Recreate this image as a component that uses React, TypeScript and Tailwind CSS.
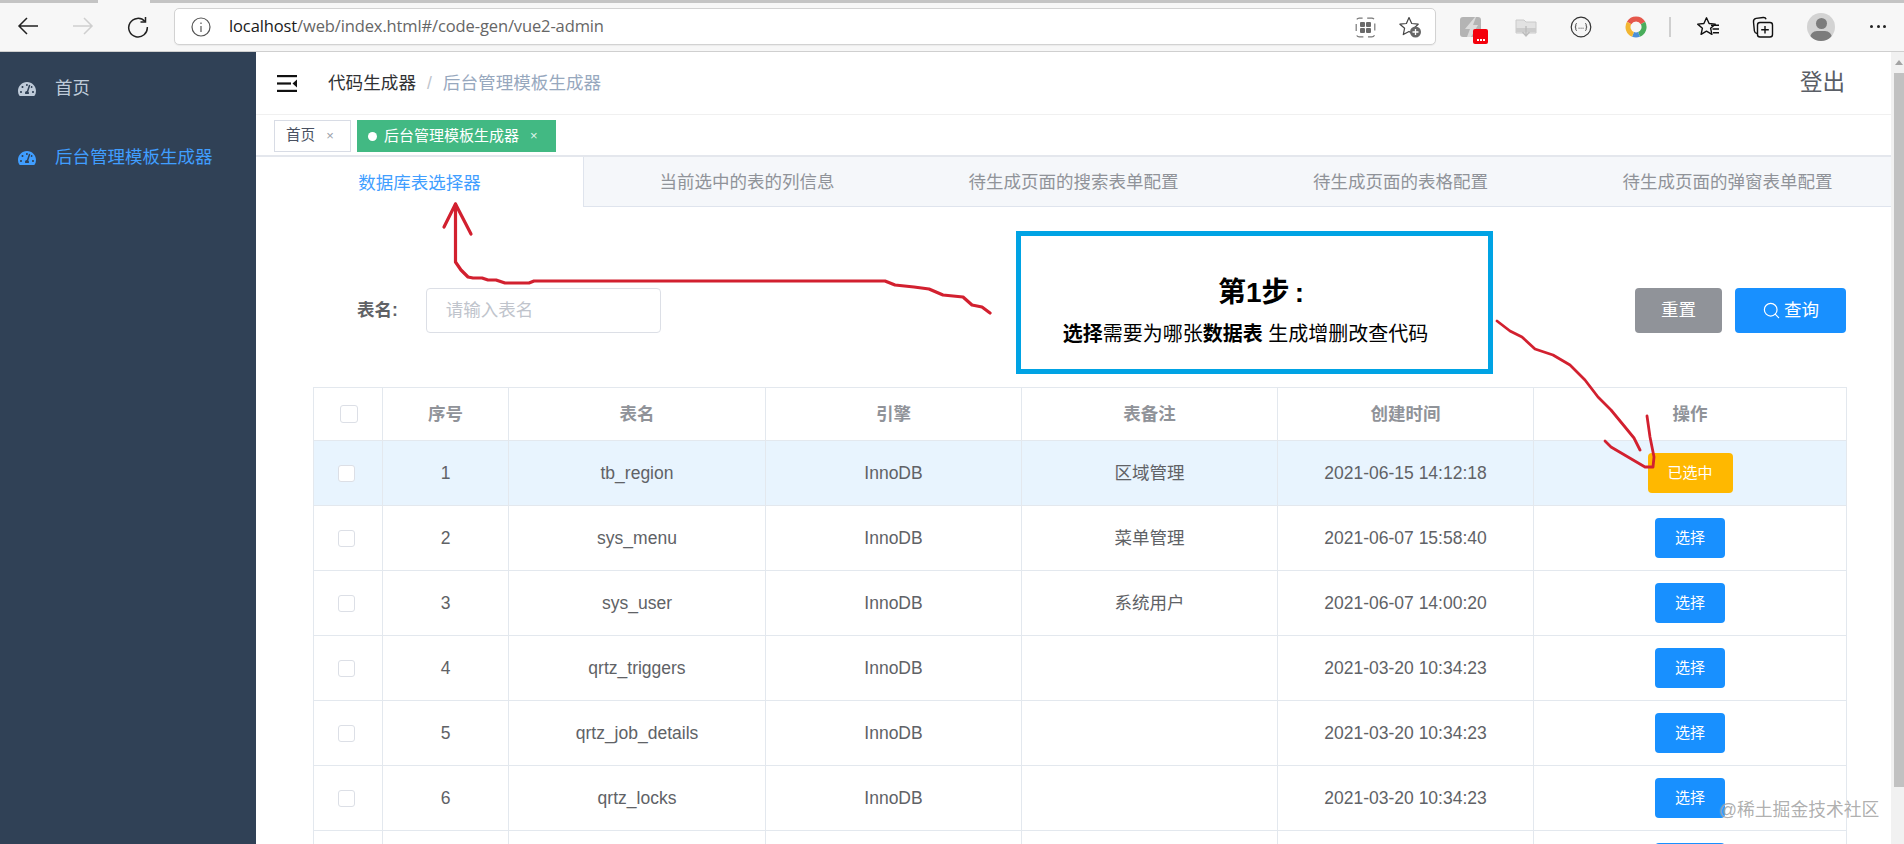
import React from "react";
import { FaTachometerAlt } from "react-icons/fa";
import { Search } from "lucide-react";

const rows = [
  { n: "1", name: "tb_region", engine: "InnoDB", note: "区域管理", time: "2021-06-15 14:12:18", on: true },
  { n: "2", name: "sys_menu", engine: "InnoDB", note: "菜单管理", time: "2021-06-07 15:58:40" },
  { n: "3", name: "sys_user", engine: "InnoDB", note: "系统用户", time: "2021-06-07 14:00:20" },
  { n: "4", name: "qrtz_triggers", engine: "InnoDB", note: "", time: "2021-03-20 10:34:23" },
  { n: "5", name: "qrtz_job_details", engine: "InnoDB", note: "", time: "2021-03-20 10:34:23" },
  { n: "6", name: "qrtz_locks", engine: "InnoDB", note: "", time: "2021-03-20 10:34:23" },
  { n: "", name: "", engine: "", note: "", time: "", partial: true },
];

const tabs = ["数据库表选择器", "当前选中的表的列信息", "待生成页面的搜索表单配置", "待生成页面的表格配置", "待生成页面的弹窗表单配置"];

function BrowserBar() {
  return (
    <div className="h-[52px] shrink-0 bg-[#f7f7f7] border-b border-[#cfcfcf] relative flex items-start">
      <div className="absolute top-0 left-0 right-0 h-[3px] bg-[#c4c4c4]">
        <div className="ml-[98px] w-[52px] h-[3px] bg-[#f7f7f7]" />
      </div>
      <svg className="absolute left-[17px] top-[16px]" width="22" height="20" viewBox="0 0 22 20" fill="none" stroke="#222" strokeWidth="1.5">
        <path d="M21 10H2M10 2l-8 8 8 8" />
      </svg>
      <svg className="absolute left-[72px] top-[16px]" width="22" height="20" viewBox="0 0 22 20" fill="none" stroke="#cfcfcf" strokeWidth="1.5">
        <path d="M1 10h19M12 2l8 8-8 8" />
      </svg>
      <svg className="absolute left-[127px] top-[16px]" width="22" height="22" viewBox="0 0 22 22" fill="none" stroke="#222" strokeWidth="1.5">
        <path d="M18 5.5A9.3 9.3 0 1 0 20.3 11" />
        <path d="M18.5 1v5h-5" />
      </svg>
      <div className="absolute left-[174px] top-[8px] w-[1262px] h-[37px] bg-white rounded-[5px] border border-[#d2d2d2] shadow-[0_1px_1px_rgba(0,0,0,0.05)] flex items-center">
        <svg className="ml-[16px] shrink-0" width="20" height="20" viewBox="0 0 20 20" fill="none" stroke="#555" strokeWidth="1.2">
          <circle cx="10" cy="10" r="9" />
          <path d="M10 9v6M10 5.5v1.4" />
        </svg>
        <div className="ml-[18px] text-[16.5px] font-['Open_Sans','Noto_Sans',sans-serif] text-[#666] tracking-[-0.12px] whitespace-nowrap">
          <span className="text-[#1a1a1a]">localhost</span>/web/index.html#/code-gen/vue2-admin
        </div>
      </div>
      <svg className="absolute left-[1355px] top-[17px]" width="21" height="21" viewBox="0 0 21 21" fill="none">
        <rect x="1.2" y="1.2" width="18.6" height="18.6" rx="3" stroke="#777" strokeWidth="1.2" strokeDasharray="7 4.6" strokeDashoffset="-8" />
        <rect x="5" y="5" width="5" height="5" rx="1" fill="#6a6a6a" />
        <rect x="11" y="5" width="5" height="5" rx="1" fill="#6a6a6a" />
        <rect x="5" y="11" width="5" height="5" rx="1" fill="#6a6a6a" />
        <rect x="11" y="11" width="5" height="5" rx="1" fill="#6a6a6a" />
      </svg>
      <svg className="absolute left-[1399px] top-[16px]" width="24" height="23" viewBox="0 0 24 23" fill="none">
        <path d="M10 1.5l2.7 6 6.5.7-4.8 4.4 1.3 6.4L10 15.4 4.3 18.6l1.3-6.4L.9 8.2l6.5-.7z" stroke="#444" strokeWidth="1.2" strokeLinejoin="round" />
        <circle cx="16.5" cy="16" r="5.5" fill="#666" />
        <path d="M16.5 13v6M13.5 16h6" stroke="#fff" strokeWidth="1.3" />
      </svg>
      <svg className="absolute left-[1460px] top-[17px]" width="22" height="21" viewBox="0 0 22 21">
        <rect width="21" height="20" rx="3" fill="#b4b4b4" />
        <path d="M15 0L5 12h5l-3 8h4l7-12h-5l3-8z" fill="#dcdcdc" />
      </svg>
      <div className="absolute left-[1473px] top-[29px] w-[15px] h-[15px] bg-[#f4000c] rounded-[2px] flex items-end justify-center pb-[3px] gap-[1px]">
        <span className="w-[2px] h-[2px] bg-white" />
        <span className="w-[2px] h-[2px] bg-white" />
        <span className="w-[2px] h-[2px] bg-white" />
      </div>
      <svg className="absolute left-[1515px] top-[18px]" width="22" height="20" viewBox="0 0 22 20">
        <path d="M1 2h8l2 2h10v11H1z" fill="#e2e2e2" stroke="#cacaca" />
        <path d="M1 10h20v4H1z" fill="#cccccc" />
        <path d="M11 8v9M7.5 14l3.5 4 3.5-4" fill="none" stroke="#bdbdbd" strokeWidth="1.4" />
      </svg>
      <svg className="absolute left-[1570px] top-[16px]" width="22" height="22" viewBox="0 0 22 22" fill="none">
        <circle cx="11" cy="11" r="9.8" stroke="#333" strokeWidth="1.2" />
        <path d="M6.8 7.5c-1 0-1 .6-1 1.5v1c0 .6-.3 1-.9 1 .6 0 .9.4.9 1v1c0 .9 0 1.5 1 1.5M15.2 7.5c1 0 1 .6 1 1.5v1c0 .6.3 1 .9 1-.6 0-.9.4-.9 1v1c0 .9 0 1.5-1 1.5" stroke="#333" strokeWidth="0.9" />
        <path d="M8.6 12.2h.9M10.6 12.2h.9M12.6 12.2h.9" stroke="#333" strokeWidth="1" />
      </svg>
      <svg className="absolute left-[1625px] top-[16px]" width="22" height="22" viewBox="0 0 22 22" fill="none" strokeWidth="5">
        <path d="M4.1 7A8 8 0 0 1 18 7" stroke="#e5574b" />
        <path d="M18 7A8 8 0 0 1 14 18.4" stroke="#49ad5b" />
        <path d="M14 18.4A8 8 0 0 1 8 18.4" stroke="#4a8fd8" />
        <path d="M8 18.4A8 8 0 0 1 4.1 7" stroke="#f2b632" />
      </svg>
      <div className="absolute left-[1669px] top-[17px] w-[2px] h-[20px] bg-[#cfcfcf]" />
      <svg className="absolute left-[1697px] top-[16px]" width="23" height="22" viewBox="0 0 23 22" fill="none" stroke="#111" strokeWidth="1.4" strokeLinejoin="round">
        <path d="M9.5 1.8l2.6 5.7 6.2.6-4.7 4.1 1.3 6.1-5.4-3.1-5.4 3.1 1.3-6.1L.7 8.1l6.2-.6z" />
        <path d="M14 9.2h8M15.5 13h6.5M16 16.8h6" />
      </svg>
      <svg className="absolute left-[1752px] top-[16px]" width="23" height="22" viewBox="0 0 23 22" fill="none" stroke="#111" strokeWidth="1.4">
        <rect x="5.5" y="6.5" width="15" height="14.5" rx="2.5" />
        <path d="M13 10v7.5M9.2 13.8h7.6" />
        <path d="M5 17.5c-1.5-.4-2.4-1.2-2.6-2.5L1.5 6c-.2-1.8.7-3.3 2.6-3.6l7-.9c1.6-.2 2.6.5 3 1.8" />
      </svg>
      <div className="absolute left-[1807px] top-[13px] w-[28px] h-[28px] rounded-full bg-[#d3d3d3] overflow-hidden">
        <div className="mx-auto mt-[5px] w-[11px] h-[11px] rounded-full bg-[#7c7c7c]" />
        <div className="mx-auto mt-[2px] w-[22px] h-[14px] rounded-full bg-[#7c7c7c]" />
      </div>
      <div className="absolute left-[1870px] top-[25px] flex gap-[3.5px]">
        <span className="w-[3px] h-[3px] rounded-full bg-[#222]" />
        <span className="w-[3px] h-[3px] rounded-full bg-[#222]" />
        <span className="w-[3px] h-[3px] rounded-full bg-[#222]" />
      </div>
    </div>
  );
}

function Sidebar() {
  return (
    <aside className="w-[256px] shrink-0 bg-[#304156] pt-[4px]">
      <div className="h-[65px] flex items-center pl-[18px] text-[#bfcbd9]">
        <FaTachometerAlt size={18} />
        <span className="ml-[19px] text-[17.5px]">首页</span>
      </div>
      <div className="mt-[4px] h-[65px] flex items-center pl-[18px] text-[#409eff]">
        <FaTachometerAlt size={18} />
        <span className="ml-[19px] text-[17.5px]">后台管理模板生成器</span>
      </div>
    </aside>
  );
}

function Header() {
  return (
    <div className="h-[63px] shrink-0 border-b border-[#f0f0f0] flex items-center pl-[21px] pr-[46px]">
      <svg width="20" height="17" viewBox="0 0 20 17" fill="#111">
        <rect x="0" y="0" width="20" height="2.2" />
        <rect x="0" y="7.4" width="14" height="2.2" />
        <rect x="0" y="14.8" width="20" height="2.2" />
        <path d="M15.5 8.5L20 4.5v8z" />
      </svg>
      <span className="ml-[31px] text-[17.6px] text-[#303133]">代码生成器</span>
      <span className="ml-[11px] text-[17.5px] text-[#c0c4cc]">/</span>
      <span className="ml-[11px] text-[17.6px] text-[#97a8be]">后台管理模板生成器</span>
      <span className="ml-auto text-[22.5px] text-[#5a5e66]">登出</span>
    </div>
  );
}

function TagBar() {
  return (
    <div className="h-[42px] shrink-0 border-b-2 border-[#e4e7ed] flex items-start pt-[5px] pl-[18px] gap-[6px]">
      <div className="w-[77px] h-[32px] border border-[#d8dce5] flex items-center pl-[11px] text-[14.6px] text-[#495060]">
        首页
        <span className="ml-[11px] text-[13px] text-[#9aa0a8]">×</span>
      </div>
      <div className="w-[199px] h-[32px] bg-[#42b983] flex items-center pl-[11px] text-[15px] text-white">
        <span className="w-[9px] h-[9px] rounded-full bg-white" />
        <span className="ml-[7px]">后台管理模板生成器</span>
        <span className="ml-[11px] text-[13px] text-[#dff3ea]">×</span>
      </div>
    </div>
  );
}

function Tabs() {
  return (
    <div className="h-[50px] shrink-0 grid grid-cols-5">
      {tabs.map((t, i) => (
        <div
          key={t}
          className={
            i === 0
              ? "flex items-center justify-center pt-[2px] text-[17.5px] text-[#409eff] bg-white"
              : i === 1
              ? "flex items-center justify-center pt-[2px] text-[17.5px] text-[#909399] bg-[#f5f7fa] border-b border-l border-[#dfe4ed]"
              : "flex items-center justify-center pt-[2px] text-[17.5px] text-[#909399] bg-[#f5f7fa] border-b border-[#dfe4ed]"
          }
        >
          {t}
        </div>
      ))}
    </div>
  );
}

function Filter() {
  return (
    <div className="flex items-center justify-between">
      <div className="flex items-center">
        <span className="ml-[44px] text-[17.5px] font-bold text-[#606266]">表名:</span>
        <div className="ml-[28px] w-[235px] h-[45px] border border-[#dcdfe6] rounded-[4px] flex items-center pl-[19px] text-[17.5px] text-[#c0c4cc]">请输入表名</div>
      </div>
      <div className="flex items-center gap-[13px]">
        <div className="w-[87px] h-[45px] rounded-[4px] bg-[#909399] text-white text-[17.5px] flex items-center justify-center">重置</div>
        <div className="w-[111px] h-[45px] rounded-[4px] bg-[#1890ff] text-white text-[17.5px] flex items-center justify-center gap-[3px]">
          <Search size={19} strokeWidth={1.5} />
          查询
        </div>
      </div>
    </div>
  );
}

function Check({ className }: { className: string }) {
  return <div className={"bg-white border border-[#dcdfe6] rounded-[3px] " + className} />;
}

function DataTable() {
  const th = "border border-[#e3e8ee] text-[17.5px] font-bold text-[#909399] text-center p-0";
  const td = "border border-[#e3e8ee] text-[17.5px] text-[#606266] text-center p-0";
  return (
    <table className="w-[1533px] table-fixed border-collapse">
      <colgroup>
        <col className="w-[69px]" />
        <col className="w-[126px]" />
        <col className="w-[257px]" />
        <col className="w-[256px]" />
        <col className="w-[256px]" />
        <col className="w-[256px]" />
        <col className="w-[313px]" />
      </colgroup>
      <thead>
        <tr className="h-[53px]">
          <th className={th}>
            <Check className="w-[18px] h-[18px] ml-[26px]" />
          </th>
          <th className={th}>序号</th>
          <th className={th}>表名</th>
          <th className={th}>引擎</th>
          <th className={th}>表备注</th>
          <th className={th}>创建时间</th>
          <th className={th}>操作</th>
        </tr>
      </thead>
      <tbody>
        {rows.map((r, i) => (
          <tr key={i} className={r.on ? "h-[65px] bg-[#e8f4fe]" : "h-[65px]"}>
            <td className={td}>{!r.partial && <Check className="w-[17px] h-[17px] ml-[24px]" />}</td>
            <td className={td}>{r.n}</td>
            <td className={td}>{r.name}</td>
            <td className={td}>{r.engine}</td>
            <td className={td}>{r.note}</td>
            <td className={td}>{r.time}</td>
            <td className={td}>
              {r.on ? (
                <div className="mx-auto w-[85px] h-[40px] rounded-[4px] bg-[#ffb800] text-white text-[15px] flex items-center justify-center">已选中</div>
              ) : (
                <div className="mx-auto w-[70px] h-[40px] rounded-[4px] bg-[#1890ff] text-white text-[15px] flex items-center justify-center">{r.partial ? "" : "选择"}</div>
              )}
            </td>
          </tr>
        ))}
      </tbody>
    </table>
  );
}

export default function App() {
  return (
    <div className="h-[844px] w-[1904px] overflow-hidden relative flex flex-col bg-white font-['Liberation_Sans','Noto_Sans_CJK_SC',sans-serif]">
      <BrowserBar />
      <div className="flex-1 flex min-h-0">
        <Sidebar />
        <main className="flex-1 min-w-0 flex flex-col overflow-hidden">
          <Header />
          <TagBar />
          <Tabs />
          <div className="pt-[81px] pl-[57px] pr-[45px]">
            <Filter />
            <div className="mt-[54px]">
              <DataTable />
            </div>
          </div>
        </main>
        <div className="w-[13px] shrink-0 bg-[#f1f1f1] relative pl-[3px]">
          <div className="h-[21px] flex items-center justify-center">
            <span className="w-0 h-0 border-l-[4px] border-r-[4px] border-b-[5px] border-l-transparent border-r-transparent border-b-[#a3a3a3]" />
          </div>
          <div className="h-[714px] bg-[#c1c1c1]" />
        </div>
      </div>

      {/* callout annotation */}
      <div className="absolute left-[1016px] top-[231px] w-[477px] h-[143px] bg-white border-[5px] border-[#00a3e4] flex flex-col items-center text-black">
        <div className="mt-[39px] ml-[13px] text-[28px] leading-[36px] font-bold">
          第1步<span className="ml-[5px]">:</span>
        </div>
        <div className="mt-[9px] mr-[18px] text-[20px] leading-[28px] whitespace-nowrap">
          <b>选择</b>需要为哪张<b>数据表</b> 生成增删改查代码
        </div>
      </div>

      {/* hand-drawn arrows */}
      <svg className="absolute inset-0 pointer-events-none" width="1904" height="844" fill="none" stroke="#d2202f" strokeWidth="3.2" strokeLinejoin="round" strokeLinecap="round">
        <path d="M444 227L455.5 204L471 234" />
        <path d="M455.5 204V262L461 270L468 277L473 278H482L488 280L496 280L505 283H529L534 281H885L895 285L914 287L929 289L943 295L963 297L972 305L982 307L990 313" />
        <path d="M1497 321L1510 331L1522 337L1535 349L1553 355L1570 365L1585 380L1598 397L1611 410L1625 427L1634 438L1640 450" strokeWidth="2.8" />
        <path d="M1647 416L1650 437L1654 457L1653 467H1645L1628 457L1611 447L1605 441" strokeWidth="2.8" />
      </svg>

      {/* watermark */}
      <div className="absolute left-[1719px] top-[798px] text-[17.8px] leading-[24px] whitespace-nowrap text-[rgba(130,130,130,0.65)] [text-shadow:0_0_1px_rgba(255,255,255,0.7)]">
        @稀土掘金技术社区
      </div>
    </div>
  );
}
